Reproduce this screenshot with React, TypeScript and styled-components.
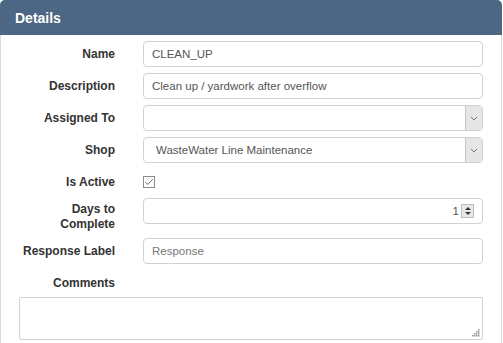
import React from 'react';
import styled, { createGlobalStyle } from 'styled-components';

const GlobalStyle = createGlobalStyle`
  html, body {
    margin: 0;
    padding: 0;
    overflow: hidden;
    background: #fff;
    font-family: "Liberation Sans", Arial, sans-serif;
  }
`;

const Panel = styled.div`
  width: 500px;
  border: 1px solid #dcdcdc;
  border-radius: 5px;
  background: #fff;
`;

const Header = styled.div`
  height: 35px;
  margin: -1px -1px 0;
  padding: 0 15px;
  display: flex;
  align-items: center;
  background: #4b6784;
  color: #fff;
  font-size: 14px;
  font-weight: bold;
  border-radius: 5px 5px 0 0;
`;

const Form = styled.div`
  display: grid;
  grid-template-columns: 96px 1fr;
  column-gap: 28px;
  row-gap: 6px;
  padding: 6px 18px 20px;
`;

const Label = styled.label<{ $multi?: boolean }>`
  padding-top: ${(p) => (p.$multi ? '4px' : '6px')};
  text-align: right;
  font-size: 12px;
  line-height: 15px;
  font-weight: bold;
  color: #333;
`;

const TextInput = styled.input`
  box-sizing: border-box;
  width: 100%;
  height: 26px;
  padding: 0 8px;
  border: 1px solid #d2d2d2;
  border-radius: 4px;
  font-family: inherit;
  font-size: 11.5px;
  color: #555;
  outline: none;

  &::placeholder {
    color: #777;
  }
`;

const SelectBox = styled.div`
  box-sizing: border-box;
  height: 26px;
  display: flex;
  border: 1px solid #d2d2d2;
  border-radius: 4px;
  overflow: hidden;
`;

const SelectValue = styled.div`
  flex: 1;
  display: flex;
  align-items: center;
  padding: 0 12px;
  font-size: 11.5px;
  color: #555;
`;

const ArrowBox = styled.div`
  width: 16px;
  display: flex;
  align-items: center;
  justify-content: center;
  background: #e6e6e6;
  border-left: 1px solid #c8c8c8;
`;

const CheckBox = styled.div`
  box-sizing: border-box;
  width: 12px;
  height: 12px;
  margin-top: 7px;
  margin-bottom: 4px;
  border: 1px solid #8a8a8a;
  display: flex;
  align-items: center;
  justify-content: center;
`;

const NumberBox = styled.div`
  box-sizing: border-box;
  height: 26px;
  display: flex;
  align-items: center;
  justify-content: flex-end;
  gap: 2px;
  padding-right: 8px;
  border: 1px solid #d2d2d2;
  border-radius: 4px;
  font-size: 11.5px;
  color: #555;
`;

const Spinner = styled.div`
  box-sizing: border-box;
  width: 13px;
  height: 14px;
  display: flex;
  flex-direction: column;
  align-items: center;
  justify-content: center;
  gap: 2px;
  background: #e8e8e8;
  border: 1px solid #bdbdbd;
`;

const Tri = styled.div<{ $down?: boolean }>`
  width: 0;
  height: 0;
  border-left: 3px solid transparent;
  border-right: 3px solid transparent;
  ${(p) => (p.$down ? 'border-top: 3px solid #333;' : 'border-bottom: 3px solid #333;')}
`;

const AreaWrap = styled.div`
  grid-column: 1 / -1;
  position: relative;
`;

const TextArea = styled.textarea`
  display: block;
  box-sizing: border-box;
  width: 100%;
  height: 43px;
  border: 1px solid #d2d2d2;
  border-radius: 2px;
  resize: none;
  font-family: inherit;
  font-size: 12px;
  outline: none;
`;

const Grip = styled.svg`
  position: absolute;
  right: 3px;
  bottom: 3px;
`;

const Chevron = () => (
  <svg width="8" height="5" viewBox="0 0 8 5">
    <path d="M1 1 L4 4 L7 1" fill="none" stroke="#777" strokeWidth="1" />
  </svg>
);

const Select = ({ value }: { value: string }) => (
  <SelectBox>
    <SelectValue>{value}</SelectValue>
    <ArrowBox>
      <Chevron />
    </ArrowBox>
  </SelectBox>
);

export default function App() {
  return (
    <>
      <GlobalStyle />
      <Panel>
        <Header>Details</Header>
        <Form>
          <Label>Name</Label>
          <TextInput defaultValue="CLEAN_UP" />

          <Label>Description</Label>
          <TextInput defaultValue="Clean up / yardwork after overflow" />

          <Label>Assigned To</Label>
          <Select value="" />

          <Label>Shop</Label>
          <Select value="WasteWater Line Maintenance" />

          <Label>Is Active</Label>
          <div>
            <CheckBox>
              <svg width="10" height="8" viewBox="0 0 10 8">
                <path d="M1.2 4 L3.8 6.4 L8.8 1.2" fill="none" stroke="#666" strokeWidth="1" />
              </svg>
            </CheckBox>
          </div>

          <Label $multi>
            Days to
            <br />
            Complete
          </Label>
          <div>
            <NumberBox>
              <span>1</span>
              <Spinner>
                <Tri />
                <Tri $down />
              </Spinner>
            </NumberBox>
          </div>

          <Label>Response Label</Label>
          <TextInput placeholder="Response" />

          <Label>Comments</Label>
          <div />

          <AreaWrap>
            <TextArea />
            <Grip width="8" height="8" viewBox="0 0 8 8">
              {[
                [6, 0],
                [6, 2],
                [4, 2],
                [6, 4],
                [4, 4],
                [2, 4],
                [6, 6],
                [4, 6],
                [2, 6],
                [0, 6],
              ].map(([x, y]) => (
                <rect key={`${x}-${y}`} x={x} y={y} width="1.5" height="1.5" fill="#999" />
              ))}
            </Grip>
          </AreaWrap>
        </Form>
      </Panel>
    </>
  );
}
